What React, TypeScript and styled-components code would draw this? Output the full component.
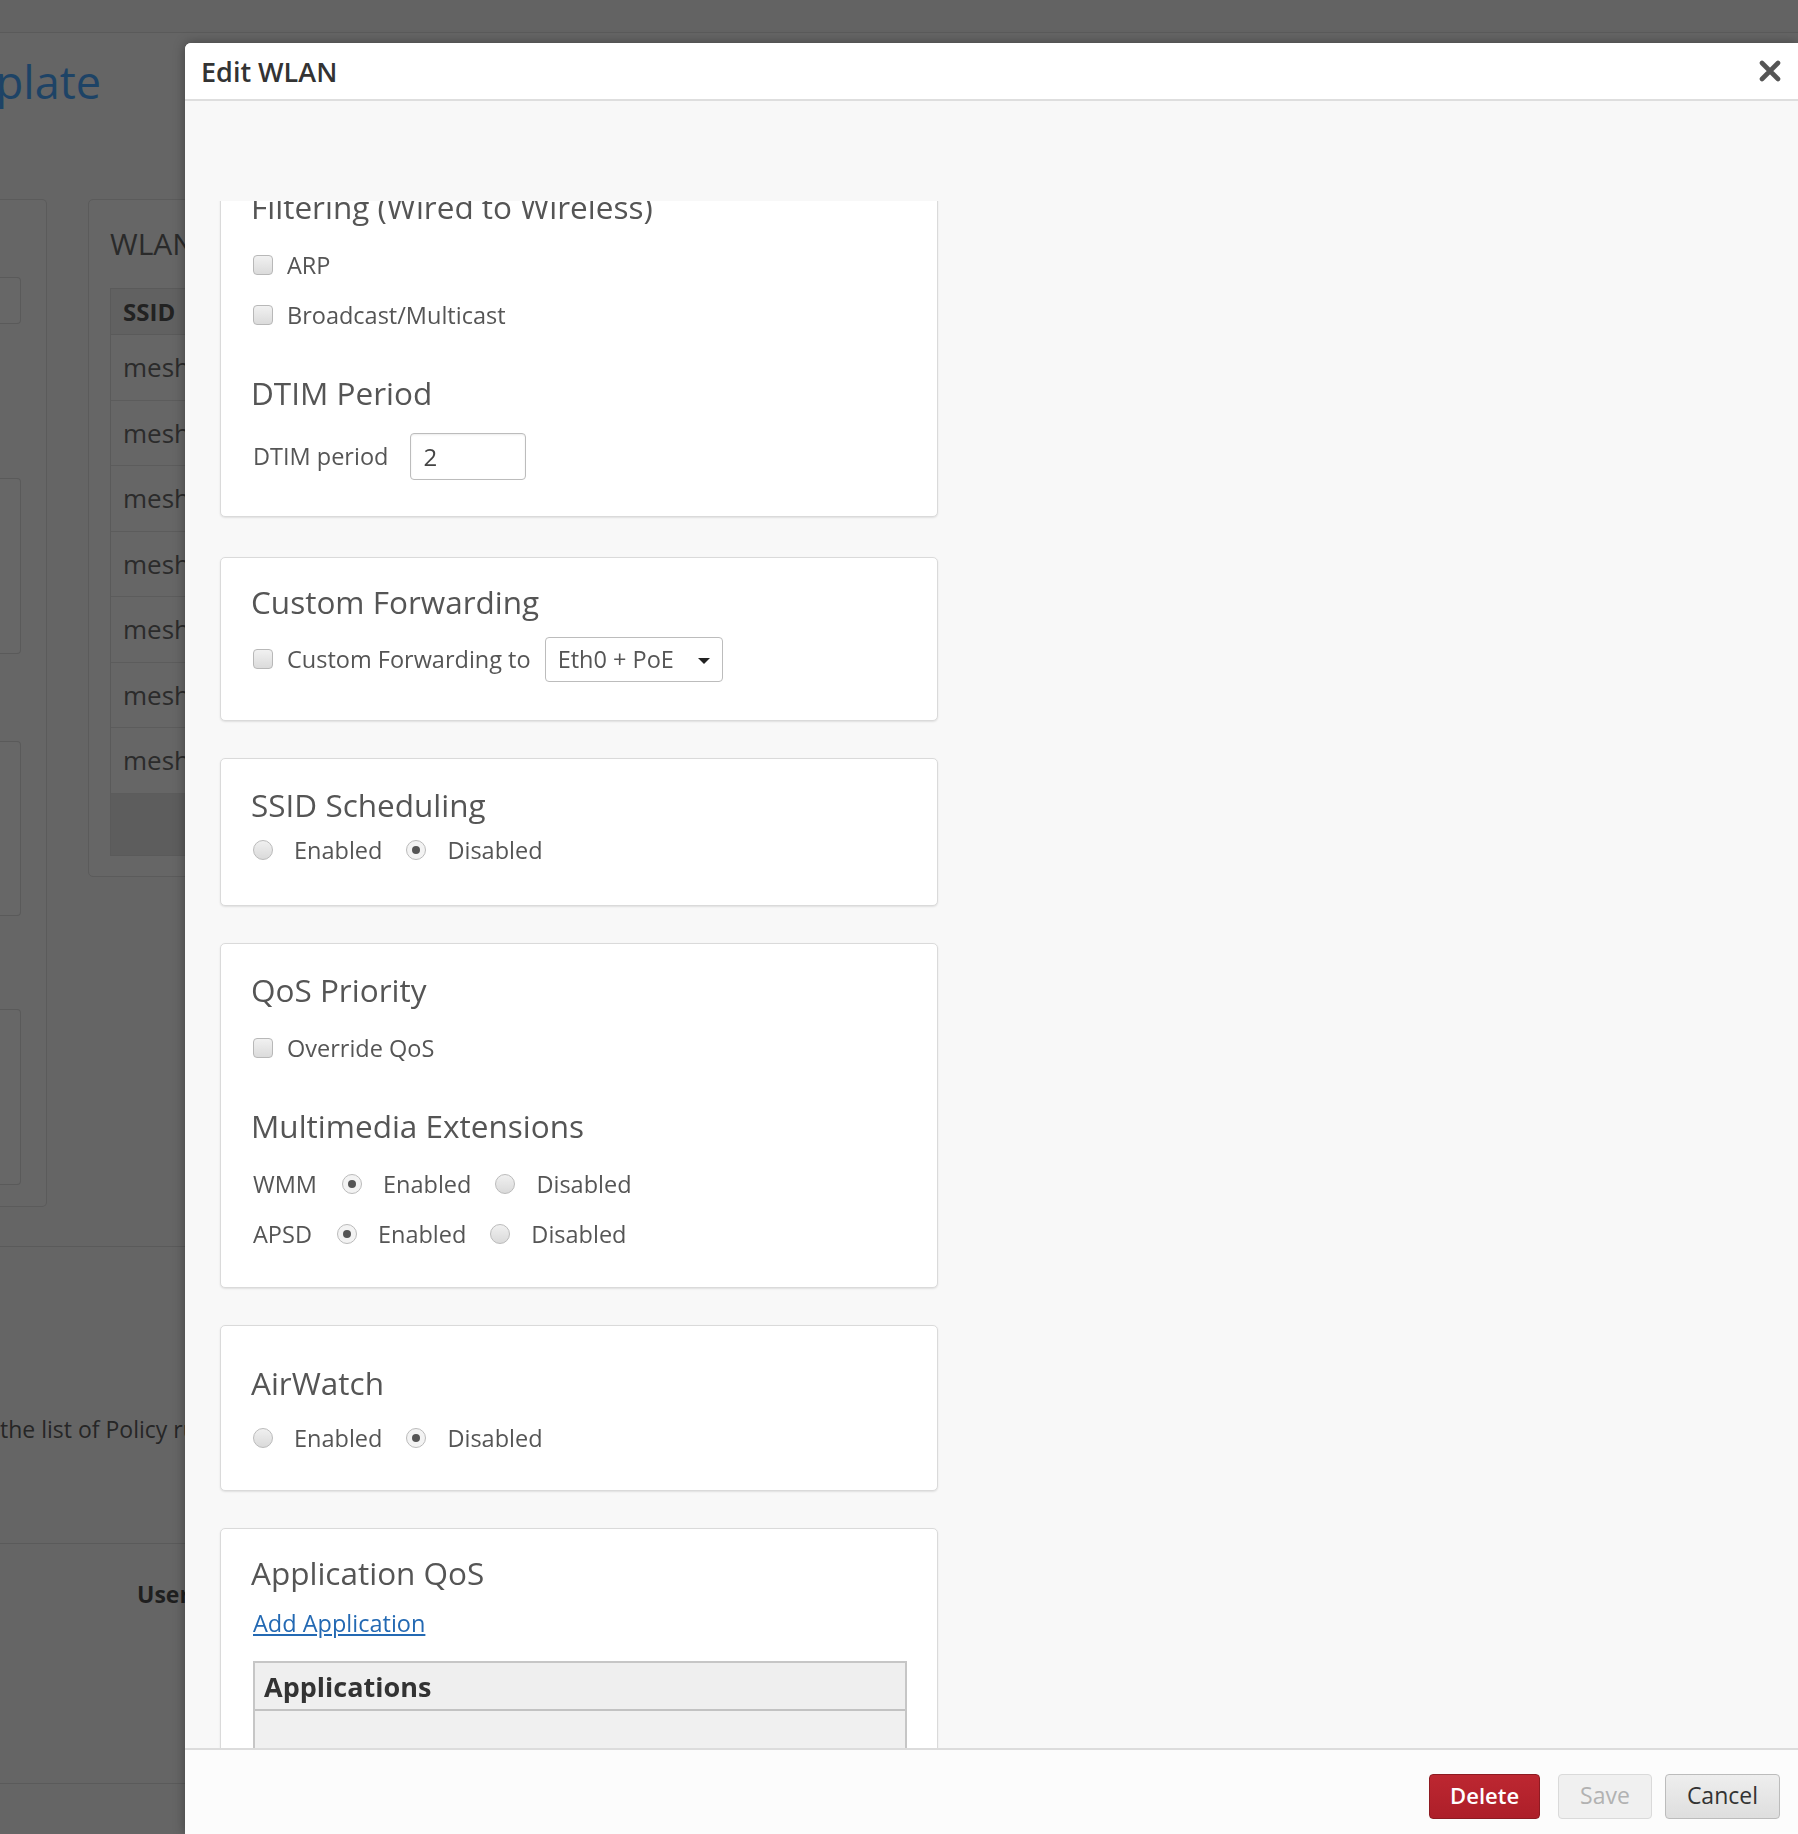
import React, { useLayoutEffect, useRef } from 'react';
import styled, { createGlobalStyle } from 'styled-components';

const GlobalStyle = createGlobalStyle`
  html, body {
    margin: 0;
    padding: 0;
  }
  body {
    font-family: 'Open Sans', 'Liberation Sans', sans-serif;
    background: #656565;
    overflow: hidden;
  }
  * {
    box-sizing: border-box;
  }
`;

/* ---------- dimmed page behind the dialog ---------- */

const Page = styled.div`
  width: 1798px;
  height: 1834px;
  overflow: hidden;
  background: #656565;
  color: #262626;
`;

const NavBar = styled.div`
  height: 33px;
  background: #636363;
  border-bottom: 1px solid #5a5a5a;
`;

const PageTitle = styled.div`
  width: 101px;
  margin-top: 22px;
  display: flex;
  justify-content: flex-end;
  overflow: hidden;
  white-space: nowrap;
  font-size: 45px;
  line-height: 54px;
  color: #1d4366;
`;

const Workspace = styled.div`
  display: flex;
  align-items: flex-start;
  gap: 41px;
  margin-top: 90px;
`;

const SidePanel = styled.div`
  width: 47px;
  height: 1008px;
  flex-shrink: 0;
  padding-top: 77px;
  background: #666;
  border: 1px solid #5b5b5b;
  border-left: none;
  border-radius: 0 5px 5px 0;
  display: flex;
  flex-direction: column;
`;

const SideBox = styled.div<{ $h: number; $mt: number }>`
  width: 21px;
  height: ${p => p.$h}px;
  margin-top: ${p => p.$mt}px;
  border: 1px solid #5a5a5a;
  border-left: none;
  border-radius: 0 4px 4px 0;
  background: #676767;
`;

const WlanPanel = styled.div`
  width: 600px;
  height: 678px;
  flex-shrink: 0;
  padding: 24px 0 0 21px;
  background: #666;
  border: 1px solid #5b5b5b;
  border-radius: 5px;
`;

const WlanTitle = styled.div`
  font-size: 30px;
  line-height: 40px;
  color: #2a2a2a;
  margin-bottom: 24px;
`;

const SsidTable = styled.div`
  width: 560px;
  border: 1px solid #5a5a5a;
`;

const SsidHead = styled.div`
  height: 46px;
  padding-left: 12px;
  display: flex;
  align-items: center;
  font-size: 24px;
  font-weight: 700;
  color: #222;
  background: #616161;
  border-bottom: 1px solid #5a5a5a;
`;

const SsidRow = styled.div`
  height: 65.5px;
  padding-left: 12px;
  display: flex;
  align-items: center;
  font-size: 26px;
  color: #2b2b2b;
  border-bottom: 1px solid #5c5c5c;
`;

const SsidFiller = styled.div`
  height: 61px;
  background: #5d5d5d;
`;

const PageSection = styled.div<{ $mt: number; $h: number; $pt: number }>`
  margin-top: ${p => p.$mt}px;
  height: ${p => p.$h}px;
  padding-top: ${p => p.$pt}px;
  border-top: 1px solid #5a5a5a;
`;

const SectionText = styled.div`
  width: 185px;
  overflow: hidden;
  font-size: 23px;
  line-height: 32px;
  color: #262626;
  white-space: nowrap;
`;

const FieldLabel = styled.div`
  width: 185px;
  overflow: hidden;
  padding-left: 137px;
  font-size: 23px;
  line-height: 32px;
  font-weight: 700;
  color: #1f1f1f;
  white-space: nowrap;
`;

/* ---------- dialog ---------- */

const Modal = styled.div`
  position: fixed;
  top: 43px;
  left: 185px;
  right: 0;
  bottom: 0;
  display: flex;
  flex-direction: column;
  background: #f8f8f8;
  border-top-left-radius: 6px;
  box-shadow: 0 0 12px rgba(0, 0, 0, 0.35);
  overflow: hidden;
`;

const ModalHeader = styled.header`
  height: 58px;
  flex-shrink: 0;
  display: flex;
  align-items: center;
  justify-content: space-between;
  padding: 0 16px;
  background: #fff;
  border-bottom: 2px solid #dedede;
`;

const ModalTitle = styled.h2`
  margin: 0;
  font-size: 27px;
  font-weight: 600;
  color: #333;
`;

const CloseButton = styled.button`
  width: 24px;
  height: 24px;
  padding: 0;
  border: none;
  background: none;
  display: flex;
  align-items: center;
  justify-content: center;
  cursor: pointer;
`;

const ModalBody = styled.div`
  flex: 1;
  min-height: 0;
  display: flex;
  flex-direction: column;
  padding-top: 100px;
`;

const ScrollArea = styled.div`
  flex: 1;
  min-height: 0;
  overflow: hidden;
`;

const PanelStack = styled.div`
  display: flex;
  flex-direction: column;
  gap: 37px;
  padding: 0 0 60px 35px;
`;

const Panel = styled.section<{ $pb?: number; $after?: number }>`
  width: 718px;
  flex-shrink: 0;
  padding: 26px 32px ${p => p.$pb ?? 30}px;
  margin-bottom: ${p => p.$after ?? 0}px;
  background: #fff;
  border: 1px solid #dadada;
  border-radius: 5px;
  box-shadow: 0 1px 2px rgba(0, 0, 0, 0.1);
`;

const Heading = styled.h3<{ $mt?: number; $mb?: number }>`
  margin: ${p => p.$mt ?? 0}px 0 ${p => p.$mb ?? 13}px -2px;
  font-size: 31.5px;
  line-height: 40px;
  font-weight: 400;
  color: #555;
  white-space: nowrap;
`;

const Row = styled.div<{ $h?: number }>`
  display: flex;
  align-items: center;
  height: ${p => p.$h ?? 50}px;
  font-size: 23.5px;
  color: #555;
  white-space: nowrap;
`;

const Check = styled.span`
  width: 20px;
  height: 20px;
  margin-right: 14px;
  flex-shrink: 0;
  border: 1px solid #b8b8b8;
  border-radius: 4px;
  background: linear-gradient(#f1f1f1, #dbdbdb);
`;

const RadioDot = styled.span<{ $on?: boolean }>`
  width: 20px;
  height: 20px;
  flex-shrink: 0;
  border-radius: 50%;
  border: 1px solid #bbb;
  background: ${p => (p.$on ? '#f3f3f3' : 'linear-gradient(#f0f0f0, #dadada)')};
  display: flex;
  align-items: center;
  justify-content: center;

  &::after {
    content: '';
    display: ${p => (p.$on ? 'block' : 'none')};
    width: 8px;
    height: 8px;
    border-radius: 50%;
    background: #555;
  }
`;

const RadioGroup = styled.div`
  display: flex;
  align-items: center;
  gap: 24px;
`;

const RadioOption = styled.label`
  display: flex;
  align-items: center;
  gap: 21px;
`;

const RowLabel = styled.span`
  margin-right: 25px;
`;

const InlineLabel = styled.span`
  margin-right: 22px;
`;

const TextBox = styled.div`
  width: 116px;
  height: 47px;
  padding-left: 12px;
  display: flex;
  align-items: center;
  font-size: 24px;
  color: #444;
  background: #fff;
  border: 1px solid #bcbcbc;
  border-radius: 4px;
  box-shadow: inset 0 1px 2px rgba(0, 0, 0, 0.08);
`;

const SelectBox = styled.div`
  width: 178px;
  height: 45px;
  margin-left: 14px;
  padding: 0 12px 0 12px;
  display: flex;
  align-items: center;
  justify-content: space-between;
  font-size: 23.5px;
  color: #555;
  background: #fff;
  border: 1px solid #bcbcbc;
  border-radius: 4px;
`;

const Caret = styled.span`
  width: 0;
  height: 0;
  margin-top: 3px;
  border-left: 6px solid transparent;
  border-right: 6px solid transparent;
  border-top: 6px solid #222;
`;

const TextLink = styled.a`
  font-size: 23.5px;
  color: #2369b3;
  text-decoration: underline;
  cursor: pointer;
`;

const AppTable = styled.div`
  margin-top: 17px;
  width: 654px;
  border: 2px solid #c6c6c6;
  border-bottom: none;
`;

const AppTableHead = styled.div`
  height: 48px;
  padding-left: 9px;
  display: flex;
  align-items: center;
  font-size: 27px;
  font-weight: 700;
  color: #333;
  background: #efefef;
  border-bottom: 2px solid #c2c2c2;
`;

const AppTableRow = styled.div`
  height: 60px;
  background: #f0f0f0;
`;

const ModalFooter = styled.footer`
  height: 86px;
  flex-shrink: 0;
  display: flex;
  justify-content: flex-end;
  align-items: flex-start;
  gap: 13px;
  padding: 24px 18px 0 0;
  background: #fcfcfc;
  border-top: 2px solid #dcdcdc;
`;

type Variant = 'danger' | 'disabled' | 'default';

const FooterButton = styled.button<{ $variant: Variant }>`
  height: 45px;
  padding: 0 ${p => (p.$variant === 'danger' ? 20 : 21)}px 4px;
  margin-right: ${p => (p.$variant === 'danger' ? 5 : 0)}px;
  font-family: 'Open Sans', 'Liberation Sans', sans-serif;
  font-size: ${p => (p.$variant === 'danger' ? 22 : 23)}px;
  font-weight: ${p => (p.$variant === 'danger' ? 600 : 400)};
  border-radius: 4px;
  cursor: ${p => (p.$variant === 'disabled' ? 'default' : 'pointer')};
  color: ${p => (p.$variant === 'danger' ? '#fff' : p.$variant === 'disabled' ? '#b2b2b2' : '#333')};
  border: 1px solid
    ${p => (p.$variant === 'danger' ? '#8e1b22' : p.$variant === 'disabled' ? '#dadada' : '#bcbcbc')};
  background: ${p =>
    p.$variant === 'danger'
      ? 'linear-gradient(#bd2731, #ad1f29)'
      : p.$variant === 'disabled'
      ? '#f0f0f0'
      : 'linear-gradient(#eeeeee, #dedede)'};
`;

/* ---------- pieces ---------- */

const Radio: React.FC<{ label: string; on?: boolean }> = ({ label, on }) => (
  <RadioOption>
    <RadioDot $on={on} />
    {label}
  </RadioOption>
);

const EnableChoice: React.FC<{ enabled: boolean }> = ({ enabled }) => (
  <RadioGroup>
    <Radio label="Enabled" on={enabled} />
    <Radio label="Disabled" on={!enabled} />
  </RadioGroup>
);

const CloseIcon = () => (
  <svg width="22" height="22" viewBox="0 0 22 22">
    <path d="M3 3 L19 19 M19 3 L3 19" stroke="#555" strokeWidth="4.6" strokeLinecap="round" />
  </svg>
);

const ssids = ['mesh-01', 'mesh-02', 'mesh-03', 'mesh-04', 'mesh-05', 'mesh-06', 'mesh-07'];

const App: React.FC = () => {
  const scrollRef = useRef<HTMLDivElement>(null);

  // the dialog content is shown scrolled a little way down
  useLayoutEffect(() => {
    if (scrollRef.current) scrollRef.current.scrollTop = 41;
  }, []);

  return (
    <>
      <GlobalStyle />
      <Page>
        <NavBar />
        <PageTitle>
          <span>WLAN Template</span>
        </PageTitle>
        <Workspace>
          <SidePanel>
            <SideBox $h={47} $mt={0} />
            <SideBox $h={176} $mt={154} />
            <SideBox $h={175} $mt={87} />
            <SideBox $h={176} $mt={93} />
          </SidePanel>
          <WlanPanel>
            <WlanTitle>WLANs</WlanTitle>
            <SsidTable>
              <SsidHead>SSID</SsidHead>
              {ssids.map(s => (
                <SsidRow key={s}>{s}</SsidRow>
              ))}
              <SsidFiller />
            </SsidTable>
          </WlanPanel>
        </Workspace>
        <PageSection $mt={39} $h={297} $pt={166}>
          <SectionText>the list of Policy rules applied to this template.</SectionText>
        </PageSection>
        <PageSection $mt={0} $h={240} $pt={34}>
          <FieldLabel>User Role</FieldLabel>
        </PageSection>
        <PageSection $mt={0} $h={40} $pt={0} />
      </Page>

      <Modal role="dialog">
        <ModalHeader>
          <ModalTitle>Edit WLAN</ModalTitle>
          <CloseButton aria-label="Close">
            <CloseIcon />
          </CloseButton>
        </ModalHeader>

        <ModalBody>
          <ScrollArea ref={scrollRef}>
            <PanelStack>
              <Panel $after={3}>
                <Heading>Filtering (Wired to Wireless)</Heading>
                <Row>
                  <Check />
                  ARP
                </Row>
                <Row>
                  <Check />
                  Broadcast/Multicast
                </Row>
                <Heading $mt={33}>DTIM Period</Heading>
                <Row $h={60}>
                  <InlineLabel>DTIM period</InlineLabel>
                  <TextBox>2</TextBox>
                </Row>
              </Panel>

              <Panel>
                <Heading $mt={-2} $mb={6}>
                  Custom Forwarding
                </Heading>
                <Row $h={62}>
                  <Check />
                  Custom Forwarding to
                  <SelectBox>
                    Eth0 + PoE
                    <Caret />
                  </SelectBox>
                </Row>
              </Panel>

              <Panel>
                <Heading $mb={0}>SSID Scheduling</Heading>
                <Row>
                  <EnableChoice enabled={false} />
                </Row>
              </Panel>

              <Panel $pb={28}>
                <Heading>QoS Priority</Heading>
                <Row>
                  <Check />
                  Override QoS
                </Row>
                <Heading $mt={33}>Multimedia Extensions</Heading>
                <Row>
                  <RowLabel>WMM</RowLabel>
                  <EnableChoice enabled />
                </Row>
                <Row>
                  <RowLabel>APSD</RowLabel>
                  <EnableChoice enabled />
                </Row>
              </Panel>

              <Panel $pb={27}>
                <Heading $mt={11} $mb={10}>
                  AirWatch
                </Heading>
                <Row>
                  <EnableChoice enabled={false} />
                </Row>
              </Panel>

              <Panel>
                <Heading $mt={-2} $mb={9}>
                  Application QoS
                </Heading>
                <Row $h={42}>
                  <TextLink>Add Application</TextLink>
                </Row>
                <AppTable>
                  <AppTableHead>Applications</AppTableHead>
                  <AppTableRow />
                </AppTable>
              </Panel>
            </PanelStack>
          </ScrollArea>
        </ModalBody>

        <ModalFooter>
          <FooterButton $variant="danger">Delete</FooterButton>
          <FooterButton $variant="disabled" disabled>
            Save
          </FooterButton>
          <FooterButton $variant="default">Cancel</FooterButton>
        </ModalFooter>
      </Modal>
    </>
  );
};

export default App;
